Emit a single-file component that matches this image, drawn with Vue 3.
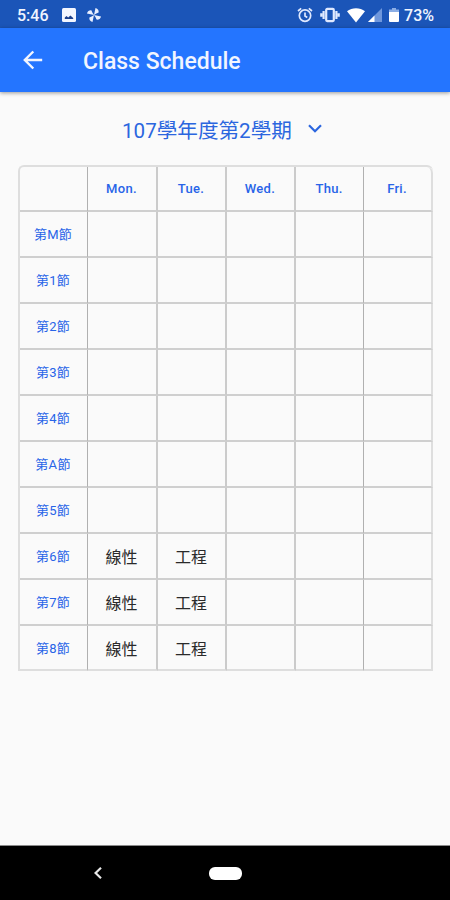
<template>
    <div class="screen">
        <header class="status-bar">
            <span class="clock">5:46</span>
            <svg class="icon-image" viewBox="0 0 14 14">
                <rect width="14" height="14" rx="1.5" fill="#f3f6ff" />
                <path d="M2.800 11V9.600l1.700-1.600 1.700 1.600 2.200-2.200 2.800 2.600v1z" fill="#1b3f8c" />
            </svg>
            <svg class="icon-fan" viewBox="0 0 16 16" fill="#e9efff">
                <path d="M8 8V.8C10.500 1 12 2.600 12 4.600L10 6z" />
                <path d="M8 8H15.200C15 10.500 13.400 12 11.400 12L10 10z" />
                <path d="M8 8V15.200C5.500 15 4 13.400 4 11.400L6 10z" />
                <path d="M8 8H.8C1 5.500 2.600 4 4.600 4L6 6z" />
            </svg>

            <div class="status-right">
                <svg class="icon-alarm" viewBox="0 0 16 16" fill="none" stroke="#e0e9ff" stroke-width="1.700">
                    <circle cx="8" cy="8.600" r="5.700" />
                    <path d="M8 5.500v3.600l2.300 1.400M1 4l3.200-2.700M15 4l-3.200-2.700" />
                </svg>
                <svg class="icon-vibrate" viewBox="0 0 20 16" fill="none" stroke="#e0e9ff">
                    <rect x="6.200" y="1.900" width="7.600" height="12.200" rx="1" stroke-width="2.200" />
                    <path d="M3.600 4v8M16.400 4v8M1.300 6.200v3.600M18.700 6.200v3.600" stroke-width="2.200" />
                </svg>
                <svg class="icon-wifi" viewBox="0 0 18 15">
                    <path d="M0 3.200C5-.9 13-.9 18 3.200L9 14.500z" fill="#fff" />
                </svg>
                <svg class="icon-signal" viewBox="0 0 14 14">
                    <path d="M14 0v14H0z" fill="#6f97dc" />
                    <path d="M6.500 7.500V14H0z" fill="#fff" />
                </svg>
                <svg class="icon-battery" viewBox="0 0 10 14">
                    <path d="M3 0h4v1.500h3V5H0V1.500h3z" fill="#8caee5" />
                    <path d="M0 4h10v9a1 1 0 0 1-1 1H1a1 1 0 0 1-1-1z" fill="#fff" />
                </svg>
                <span class="percent">73%</span>
            </div>
        </header>

        <nav class="app-bar">
            <svg class="icon-back" viewBox="0 0 20 20" fill="none" stroke="#f1f5ff" stroke-width="2.400">
                <path d="M19.200 10H2M10.300 1.500 1.800 10l8.500 8.500" />
            </svg>
            <h1>Class Schedule</h1>
        </nav>

        <main class="content">
            <button class="semester" type="button">
                <span>107學年度第2學期</span>
                <svg viewBox="0 0 14 9" fill="none" stroke="#2b66df" stroke-width="2.200">
                    <path d="M1 1.200 7 7.200l6-6" />
                </svg>
            </button>

            <div class="timetable">
                <div class="cell head"></div>
                <div v-for="day in days" :key="day" class="cell head">{{ day }}</div>
                <template v-for="row in rows" :key="row.period">
                    <div class="cell period">第{{ row.period }}節</div>
                    <div v-for="(course, index) in row.courses" :key="index" class="cell">{{ course }}</div>
                </template>
            </div>
        </main>

        <footer class="nav-bar">
            <svg class="nav-back" viewBox="0 0 8 12" fill="none" stroke="#e8e8e8" stroke-width="2.200">
                <path d="M7 .8 1.600 6 7 11.200" />
            </svg>
            <span class="nav-home"></span>
        </footer>
    </div>
</template>

<script setup>
const days = ['Mon.', 'Tue.', 'Wed.', 'Thu.', 'Fri.'];

const empty = ['', '', '', '', ''];
const busy = ['線性', '工程', '', '', ''];

const rows = ['M', '1', '2', '3', '4', 'A', '5', '6', '7', '8'].map((period) => ({
    period,
    courses: ['6', '7', '8'].includes(period) ? busy : empty
}));
</script>

<style>
body {
    background: #fafafa;
}
</style>

<style scoped>
.screen {
    display: flex;
    flex-direction: column;
    width: 450px;
    height: 900px;
    overflow: hidden;
    background: #fafafa;
    font-family: Roboto, "Noto Sans CJK TC", sans-serif;
}

.screen svg {
    display: block;
    flex: none;
}

/* Barra de estado */
.status-bar {
    display: flex;
    align-items: center;
    flex: none;
    box-sizing: border-box;
    height: 28px;
    padding: 2px 16px 0 17px;
    background: #1b55b8;
    color: #f1f5ff;
    font-size: 16px;
    font-weight: 500;
}

.clock {
    width: 45px;
}

.icon-image {
    width: 14px;
    height: 14px;
}

.icon-fan {
    width: 16px;
    height: 16px;
    margin-left: 10px;
    transform: rotate(12deg);
}

.status-right {
    display: flex;
    align-items: center;
    margin-left: auto;
}

.icon-alarm {
    width: 16px;
    height: 16px;
}

.icon-vibrate {
    width: 20px;
    height: 16px;
    margin-left: 7px;
}

.icon-wifi {
    width: 18px;
    height: 15px;
    margin-left: 7px;
}

.icon-signal {
    width: 14px;
    height: 14px;
    margin-left: 3px;
}

.icon-battery {
    width: 10px;
    height: 14px;
    margin-left: 7px;
}

.percent {
    margin-left: 5px;
}

/* Cabecera */
.app-bar {
    display: flex;
    align-items: center;
    flex: none;
    box-sizing: border-box;
    height: 64px;
    padding-left: 23px;
    background: #2475ff;
    box-shadow: 0 1px 4px rgba(0, 0, 0, 0.4);
}

.icon-back {
    width: 20px;
    height: 20px;
}

.app-bar h1 {
    margin: 3px 0 0 40px;
    color: #f1f5ff;
    font-size: 23px;
    font-weight: 500;
    line-height: 28px;
}

.content {
    flex: 1;
    padding: 20px 0 0 18px;
}

.semester {
    display: flex;
    align-items: center;
    height: 34px;
    margin: 0 0 0 104px;
    padding: 0;
    border: 0;
    background: none;
    color: #2b66df;
    font: inherit;
    font-size: 20.6px;
}

.semester svg {
    width: 14px;
    height: 9px;
    margin: -1px 0 0 16px;
}

/* Tabla de horario */
.timetable {
    display: grid;
    grid-template-columns: 68px 70px 69px 69px 68px 69px;
    grid-template-rows: 45px repeat(9, 46px) 45px;
    width: 413px;
    margin-top: 19px;
    border: 2px solid #dedede;
    border-right: 0;
    border-bottom: 0;
    border-radius: 6px 6px 0 0;
}

.cell {
    display: flex;
    align-items: center;
    justify-content: center;
    padding: 0 1px 1px 0;
    border-right: 2px solid #cbcbcb;
    border-bottom: 2px solid #cfcfcf;
    color: #2a2a2a;
    font-size: 16px;
    font-weight: 400;
}

.cell:nth-child(6n + 1),
.cell:nth-child(6n + 5) {
    border-right: 1px solid #b0b0b0;
}

.cell:nth-child(6n) {
    border-right-color: #dedede;
}

.cell:nth-child(n + 61) {
    padding-bottom: 0;
    border-bottom-color: #dedede;
}

.cell:nth-child(6) {
    border-top-right-radius: 6px;
}

.head,
.period {
    color: #2864e8;
    font-size: 13px;
    letter-spacing: 0.3px;
}

.head {
    padding-bottom: 0;
    font-weight: 500;
}

/* Barra de navegación */
.nav-bar {
    display: flex;
    align-items: center;
    flex: none;
    box-sizing: border-box;
    height: 55px;
    padding-left: 94px;
    border-top: 1px solid #8a8a8a;
    background: #000;
}

.nav-back {
    width: 8px;
    height: 12px;
}

.nav-home {
    width: 33px;
    height: 13px;
    margin-left: 107px;
    border-radius: 6px;
    background: #fff;
}
</style>
